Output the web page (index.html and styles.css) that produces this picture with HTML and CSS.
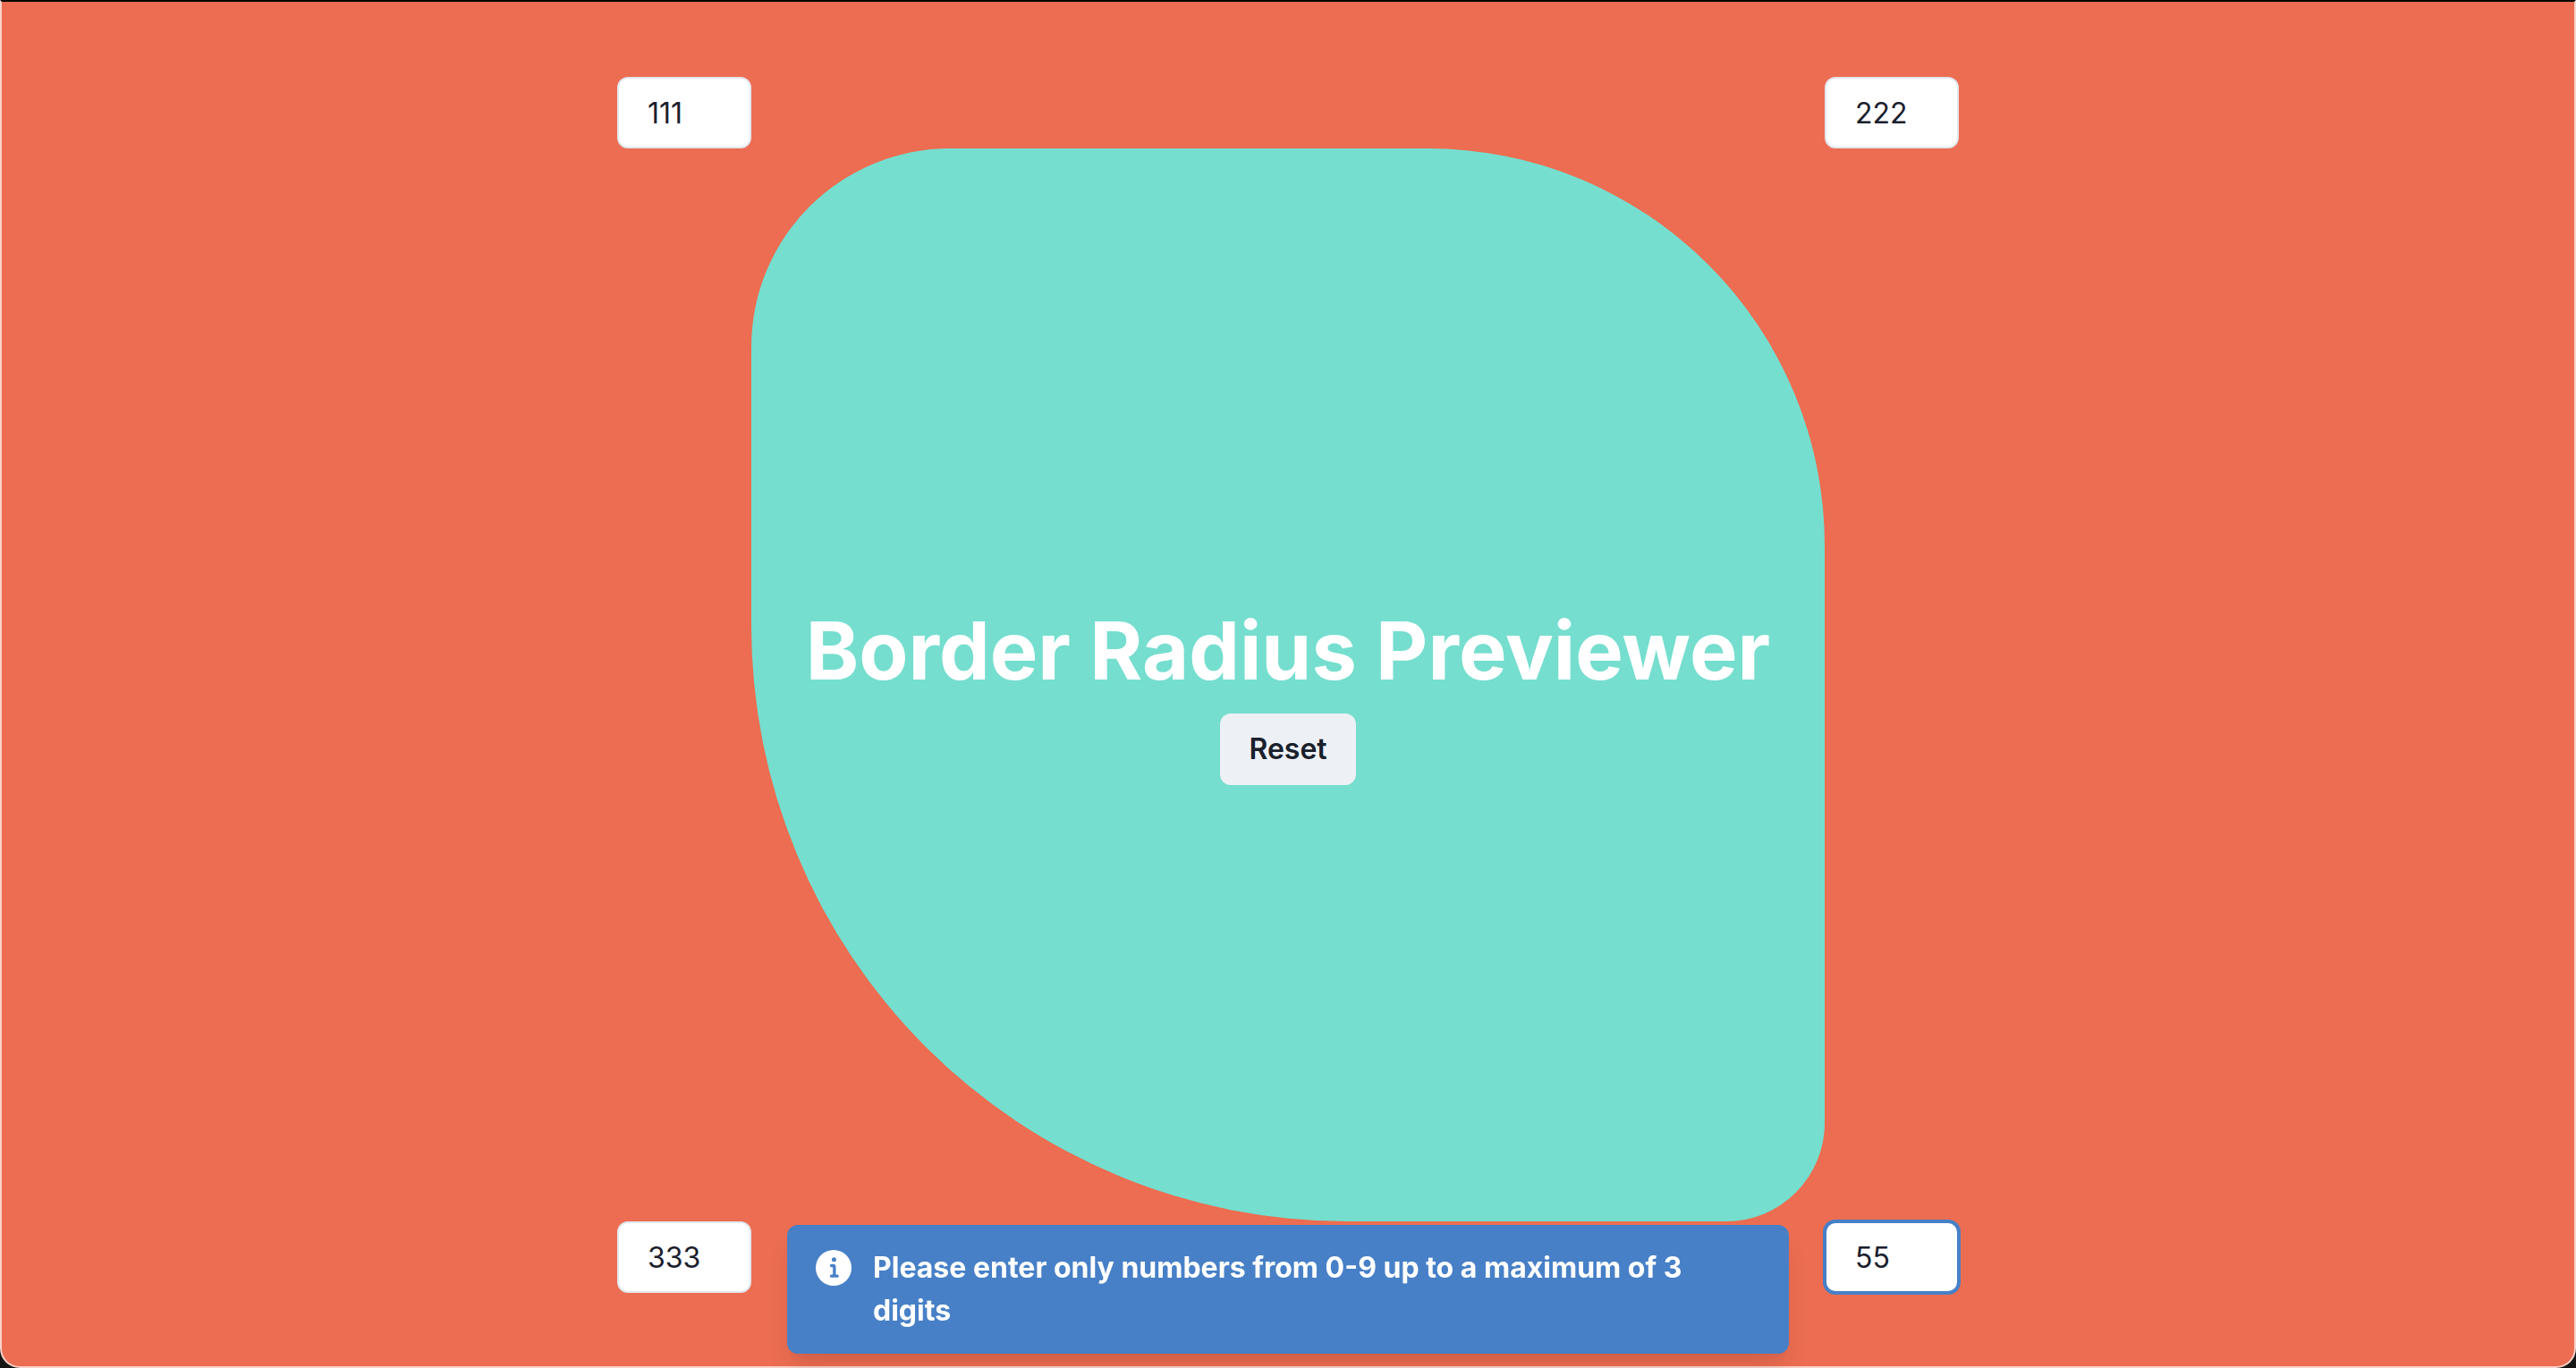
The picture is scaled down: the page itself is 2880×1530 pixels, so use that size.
FILE: index.html
```html
<!DOCTYPE html>
<html lang="en">
<head>
<meta charset="utf-8">
<meta name="viewport" content="width=device-width, initial-scale=1">
<title>Border Radius Previewer</title>
<link rel="stylesheet" href="styles.css">
</head>
<body>
<main class="app">
  <div class="previewer">
    <input class="radius-input top-left" type="text" inputmode="numeric" maxlength="3" value="111" aria-label="Top left radius">
    <input class="radius-input top-right" type="text" inputmode="numeric" maxlength="3" value="222" aria-label="Top right radius">
    <section class="preview-box">
      <h1 class="title">Border Radius Previewer</h1>
      <button class="reset" type="button">Reset</button>
    </section>
    <input class="radius-input bottom-left" type="text" inputmode="numeric" maxlength="3" value="333" aria-label="Bottom left radius">
    <input class="radius-input bottom-right is-active" type="text" inputmode="numeric" maxlength="3" value="55" aria-label="Bottom right radius">
  </div>
</main>
<div class="toast" role="alert">
  <svg class="toast-icon" viewBox="0 0 24 24" aria-hidden="true"><path fill="currentColor" d="M12,0A12,12,0,1,0,24,12,12.013,12.013,0,0,0,12,0Zm.25,5a1.5,1.5,0,1,1-1.5,1.5A1.5,1.5,0,0,1,12.25,5ZM14.5,18.5h-4a1,1,0,0,1,0-2h.75a.25.25,0,0,0,.25-.25v-4.5a.25.25,0,0,0-.25-.25H10.5a1,1,0,0,1,0-2h1a2,2,0,0,1,2,2v4.75a.25.25,0,0,0,.25.25h.75a1,1,0,1,1,0,2Z"/></svg>
  <p class="toast-text">Please enter only numbers from 0-9 up to a maximum of 3 digits</p>
</div>
</body>
</html>
```
FILE: styles.css
```css
*,
*::before,
*::after {
  box-sizing: border-box;
}

html {
  background: #161616;
}

body {
  margin: 0;
  font-family: Inter, "Liberation Sans", sans-serif;
  font-size: 32px;
  line-height: 48px;
  color: #1a202c;
}

.app {
  display: flex;
  align-items: center;
  justify-content: center;
  min-height: 100vh;
  padding-top: 2px;
  background: #ec6d51;
  border: 2px solid #fad2ca;
  border-top-color: #000;
  border-radius: 0 0 22px 22px;
}

.previewer {
  display: grid;
  grid-template-columns: 150px minmax(0, 1200px) 150px;
  grid-template-areas:
    "tl . tr"
    ". box ."
    "bl . br";
}

.top-left { grid-area: tl; }
.top-right { grid-area: tr; }
.bottom-left { grid-area: bl; }
.bottom-right { grid-area: br; }

.radius-input {
  width: 100%;
  height: 80px;
  padding: 0 32px;
  font: inherit;
  color: inherit;
  background: #fff;
  border: 2px solid #e2e8f0;
  border-radius: 12px;
  outline: none;
}

.radius-input:focus,
.radius-input.is-active {
  border-color: #4780c7;
  box-shadow: 0 0 0 2px #4780c7;
}

.preview-box {
  grid-area: box;
  display: flex;
  flex-direction: column;
  align-items: center;
  justify-content: center;
  width: 1200px;
  max-width: 100%;
  aspect-ratio: 1;
  background: #75decf;
  border-radius: 222px 444px 110px 666px;
}

.title {
  margin: 0;
  padding-top: 4px;
  font-size: 90px;
  font-weight: 700;
  line-height: 140px;
  color: #fff;
  text-align: center;
}

.reset {
  height: 80px;
  padding: 0 32px;
  font: inherit;
  font-weight: 600;
  color: inherit;
  background: #edf1f6;
  border: 0;
  border-radius: 12px;
}

.toast {
  position: fixed;
  right: 0;
  bottom: 16px;
  left: 0;
  display: flex;
  align-items: flex-start;
  gap: 24px;
  width: 1120px;
  max-width: calc(100% - 32px);
  margin: 0 auto;
  padding: 24px 48px 24px 32px;
  color: #fff;
  background: #4780c7;
  border-radius: 12px;
  box-shadow: 0 20px 30px -6px rgba(0, 0, 0, 0.1), 0 8px 12px -4px rgba(0, 0, 0, 0.05);
}

.toast-icon {
  flex: none;
  width: 40px;
  height: 40px;
  margin-top: 4px;
}

.toast-text {
  max-width: 930px;
  margin: 0;
  font-weight: 700;
}
```
